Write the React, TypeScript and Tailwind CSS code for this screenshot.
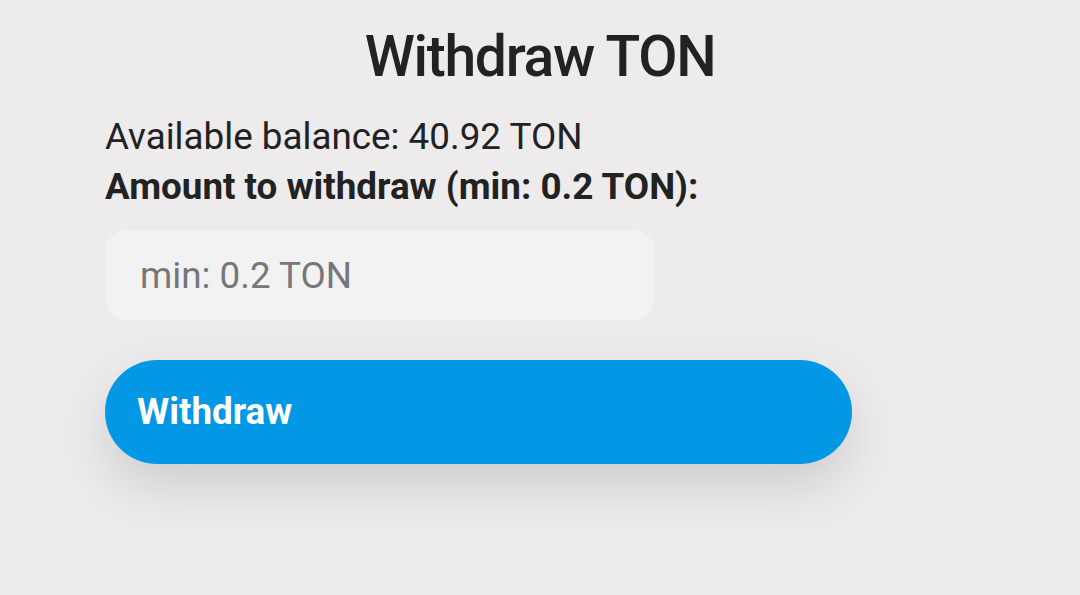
import React, { useState } from "react";

const App: React.FC = () => {
  const [amount, setAmount] = useState("");

  return (
    <div className="min-h-screen w-full bg-[#edebec] font-['Roboto',sans-serif] text-[#222222]">
      <div className="px-[105px] pt-[22px]">
        <h1 className="text-center text-[57px] leading-[70px] font-medium tracking-[-1.3px]">
          Withdraw TON
        </h1>

        <p className="mt-[20px] text-[36.8px] leading-[50px]">
          Available balance: 40.92 TON
        </p>
        <label
          htmlFor="amount"
          className="block text-[36.8px] leading-[50px] font-bold"
        >
          Amount to withdraw (min: 0.2 TON):
        </label>

        <input
          id="amount"
          type="number"
          value={amount}
          onChange={(e) => setAmount(e.target.value)}
          placeholder="min: 0.2 TON"
          className="mt-[18px] block h-[90px] w-[550px] rounded-[22px] bg-[#f3f2f3] px-[35px] text-[36.8px] text-[#222222] placeholder:text-[#777777] outline-none"
        />

        <button
          type="button"
          className="mt-[40px] flex h-[104px] w-[747px] items-center rounded-full bg-[#0398e6] px-[32px] text-[36.8px] font-bold text-white shadow-[0_22px_50px_rgba(0,0,0,0.13)]"
        >
          Withdraw
        </button>
      </div>
    </div>
  );
};

export default App;
